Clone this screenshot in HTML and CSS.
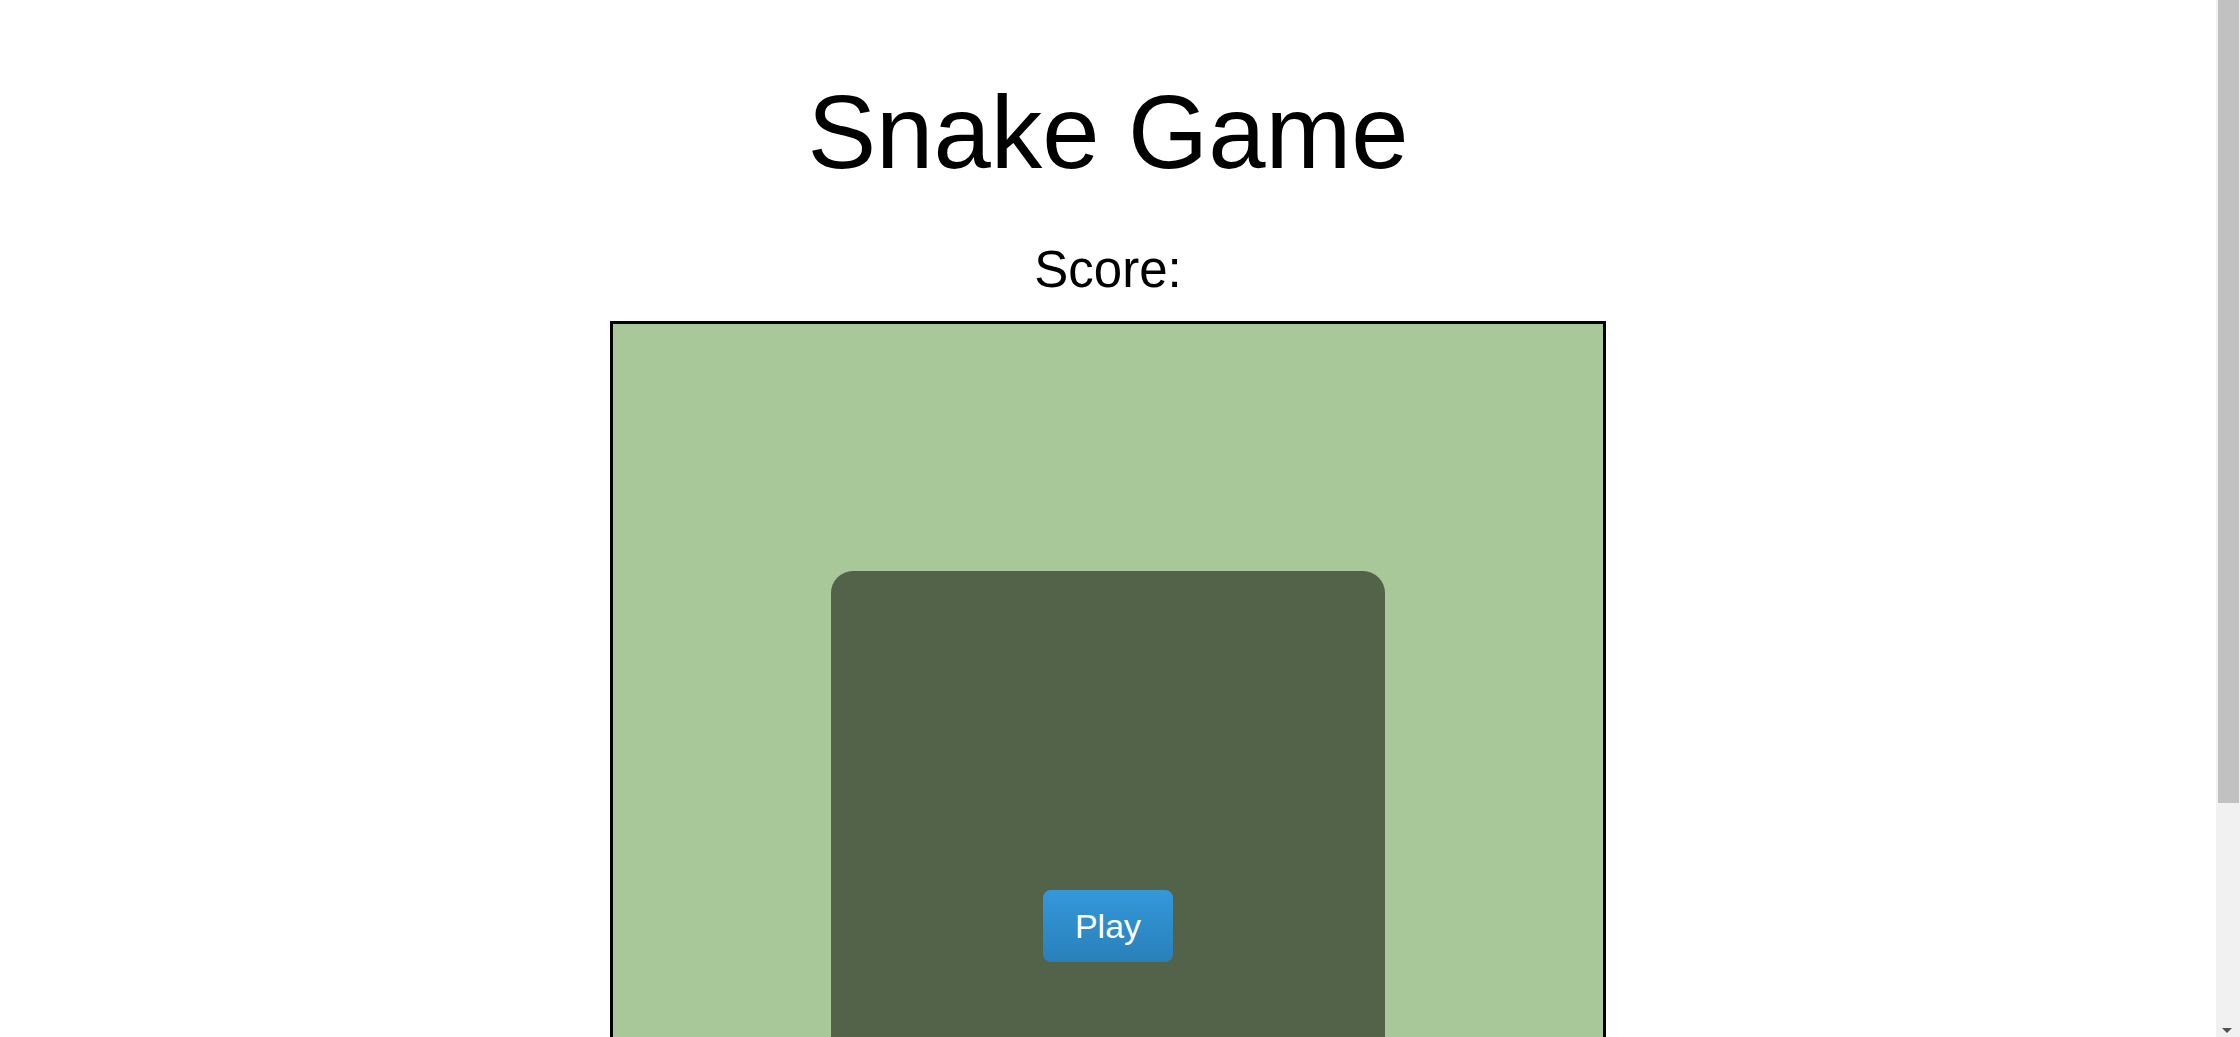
FILE: index.html
```html
<!DOCTYPE html>
<html lang="en">
<head>
<meta charset="utf-8">
<title>Snake Game</title>
<link rel="stylesheet" href="styles.css">
</head>
<body>
<main class="page">
  <h1 class="title">Snake Game</h1>
  <div class="score">Score: <span class="score-value"></span></div>
  <div class="board">
    <div class="overlay">
      <button class="play-btn" type="button">Play</button>
    </div>
  </div>
</main>
<div class="scrollbar" aria-hidden="true">
  <div class="scrollbar-thumb"></div>
  <div class="scrollbar-arrow"></div>
</div>
</body>
</html>
```

FILE: styles.css
```css
html, body {
  margin: 0;
  padding: 0;
  background: #ffffff;
}

.page {
  width: calc(100% - 24px);
  display: flex;
  flex-direction: column;
  align-items: center;
  font-family: "Liberation Sans", Arial, sans-serif;
  color: #000;
  padding: 74px 0 21px;
}

.title {
  margin: 0;
  font-size: 103px;
  font-weight: 400;
  line-height: 1.15;
}

.score {
  margin-top: 49px;
  font-size: 51px;
  line-height: 1.15;
}

.board {
  position: relative;
  margin-top: 21px;
  width: 990px;
  height: 990px;
  border: 3px solid #000;
  background: #a8c89a;
}

.overlay {
  position: absolute;
  left: 218px;
  top: 247px;
  width: 554px;
  height: 709px;
  border-radius: 22px;
  background: #536349;
  display: flex;
  align-items: center;
  justify-content: center;
}

.play-btn {
  font-family: "Liberation Sans", Arial, sans-serif;
  font-size: 34px;
  line-height: 39px;
  color: #ffffff;
  border: none;
  border-radius: 8px;
  padding: 17px 0 16px;
  width: 130px;
  background: linear-gradient(to bottom, #3498db, #2980b9);
  cursor: pointer;
}

.scrollbar {
  position: fixed;
  top: 0;
  right: 0;
  width: 24px;
  height: 100%;
  background: #f1f1f1;
}

.scrollbar-thumb {
  position: absolute;
  top: 0;
  left: 2px;
  right: 1px;
  height: 803px;
  background: #c1c1c1;
}

.scrollbar-arrow {
  position: absolute;
  bottom: 4px;
  left: 6px;
  width: 0;
  height: 0;
  border-left: 5px solid transparent;
  border-right: 5px solid transparent;
  border-top: 5px solid #505050;
}
```
